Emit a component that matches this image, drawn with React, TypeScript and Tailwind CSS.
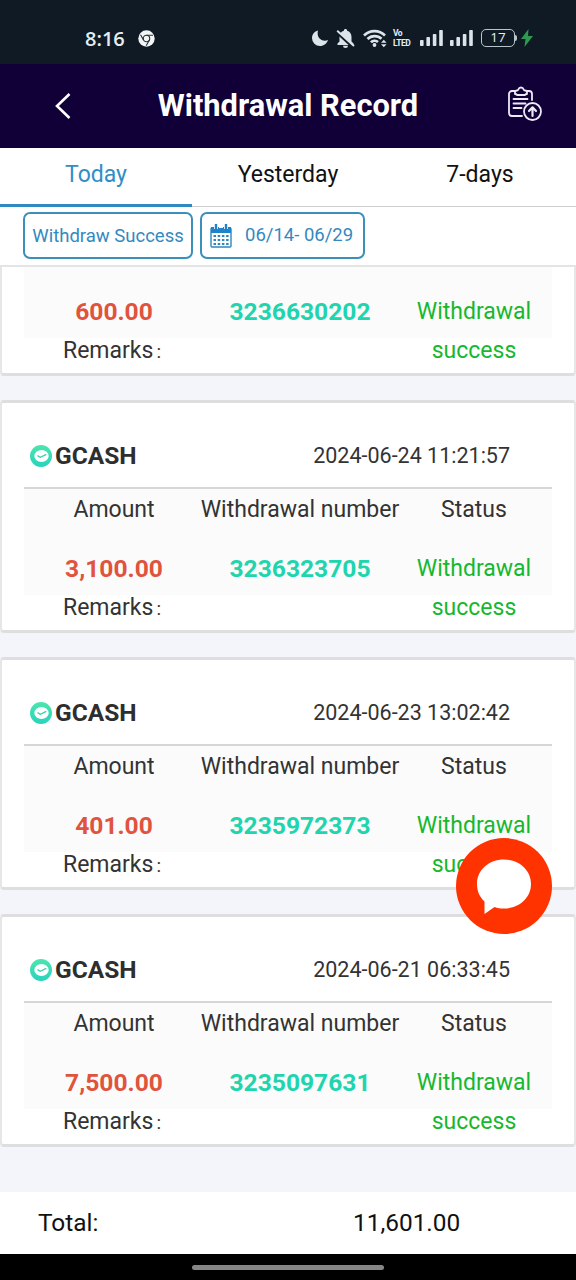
import React, { useState } from "react";


type RecordItem = {
  amount: string;
  number: string;
  date?: string;
};

const records: RecordItem[] = [
  { amount: "600.00", number: "3236630202" },
  { amount: "3,100.00", number: "3236323705", date: "2024-06-24 11:21:57" },
  { amount: "401.00", number: "3235972373", date: "2024-06-23 13:02:42" },
  { amount: "7,500.00", number: "3235097631", date: "2024-06-21 06:33:45" },
];

const tabs = ["Today", "Yesterday", "7-days"];


function SignalIcon() {
  return (
    <svg width="23" height="18" viewBox="0 0 23 18" fill="#dce4ea">
      <rect x="0" y="11" width="3.6" height="6" rx="0.8" />
      <rect x="6.4" y="8" width="3.6" height="9" rx="0.8" />
      <rect x="12.8" y="5" width="3.6" height="12" rx="0.8" />
      <rect x="19.2" y="1" width="3.6" height="16" rx="0.8" />
    </svg>
  );
}

function StatusBar() {
  return (
    <div className="flex h-16 shrink-0 items-center bg-[#0f1a25] pt-3 pl-[85px] pr-[43px] text-[#e6edf2]">
      <span className="w-[53px] pt-px font-['Open_Sans'] text-[20px] leading-6 font-semibold">8:16</span>
      <svg width="17" height="17" viewBox="0 0 17 17">
        <circle cx="8.5" cy="8.5" r="8.2" fill="#f2f4f5" />
        <circle cx="8.5" cy="8.5" r="3.2" fill="none" stroke="#26323c" strokeWidth="1.1" />
        <path d="M8.5 5.2h6.5M5.6 10.1 2.500 4.800M11.400 10.100 8.200 15.700" stroke="#26323c" strokeWidth="1.1" />
      </svg>
      <div className="ml-auto flex items-center">
        <svg width="18" height="18" viewBox="0 0 18 18" className="mr-[7px]">
          <path d="M7 1.500C3.500 2.300 1 5.400 1 9a8 8 0 0 0 8 8c3.800 0 7-2.600 8-6-5.500 2.500-12-2-10-9.500z" fill="#dce4ea" />
        </svg>
        <svg width="19" height="19" viewBox="0 0 19 19" className="mr-[8px]">
          <path d="M9.500 0c1.100 0 1.600.700 1.600 1.700C13.900 2.500 15.500 4.800 15.500 8v4.500l2 2V16h-16v-1.500l2-2V8c0-3.200 1.600-5.500 4.400-6.300C7.900.700 8.400 0 9.500 0zM7 16.700h5a2.500 2.300 0 0 1-5 0z" fill="#dce4ea" />
          <path d="M1 3.600 17 18.500" stroke="#0f1a25" strokeWidth="2.400" />
          <path d="M1.200 1.800 18 17" stroke="#dce4ea" strokeWidth="1.900" />
        </svg>
        <svg width="24" height="19" viewBox="0 0 24 19" fill="none" stroke="#dce4ea" strokeWidth="2.700" className="mr-[6px]">
          <path d="M1 6.500a15 15 0 0 1 21 0M4.500 10a10 10 0 0 1 14-.2M8 13.400a5 5 0 0 1 7-.4" />
          <circle cx="11.500" cy="16" r="1.900" fill="#dce4ea" stroke="none" />
          <path d="m18 13.800 2.800-3 2.800 3zM18 15.300l2.800 3 2.800-3z" fill="#dce4ea" stroke="none" />
        </svg>
        <div className="mr-[7px] flex w-[20px] flex-col font-['Roboto'] text-[8.5px] leading-[10px] font-bold tracking-[-0.5px]">
          <span>Vo</span>
          <span>LTED</span>
        </div>
        <SignalIcon />
        <div className="w-[7px]" />
        <SignalIcon />
        <div className="ml-[8px] flex h-[18px] w-[34px] items-center justify-center rounded-[5px] border-[1.5px] border-[#b9c3ca] font-['Open_Sans'] text-[13.5px] leading-none">
          17
        </div>
        <div className="h-[6px] w-[2px] rounded-r bg-[#b9c3ca]" />
        <svg width="12" height="18" viewBox="0 0 12 18" className="ml-[4px]">
          <path d="M7.500 0 0 10h4.500L3.500 18 12 7H7z" fill="#2e9a50" />
        </svg>
      </div>
    </div>
  );
}

function Header() {
  return (
    <div className="grid h-[84px] shrink-0 grid-cols-[106px_1fr_106px] items-center bg-[#110038] text-white">
      <svg width="20" height="28" viewBox="0 0 20 28" fill="none" stroke="white" strokeWidth="2.600" className="ml-[53px]">
        <path d="M16.500 2 4 14l12.500 12" />
      </svg>
      <h1 className="text-center text-[30.8px] leading-9 font-bold whitespace-nowrap">Withdrawal Record</h1>
      <svg width="36" height="36" viewBox="0 0 36 36" fill="none" stroke="#eee9f7" strokeWidth="1.800" strokeLinecap="round" strokeLinejoin="round" className="mb-[4px] ml-[37px]">
        <path d="M8 5H5a3 3 0 0 0-3 3v19a3 3 0 0 0 3 3h10M20 5h2a3 3 0 0 1 3 3v6" />
        <path d="M8 8V6Q8 4.500 10 4.500 11 4.500 11.300 3.500 12 1.500 14 1.500t2.700 2Q17 4.500 18 4.500q2 0 2 1.500V8q-1.500 0-2 1h-8q-.500-1-2-1z" />
        <path d="M6.500 13h14M6.500 17.500h12M6.500 22h8" />
        <circle cx="25.500" cy="25.500" r="8.500" />
        <path d="M25.500 30V22M22 25l3.500-3.700L29 25" strokeWidth="2.200" />
      </svg>
    </div>
  );
}

function CalendarIcon() {
  return (
    <svg width="22" height="24" viewBox="0 0 22 24">
      <rect x="1" y="4" width="20" height="19" rx="1" fill="white" stroke="#2f87bd" strokeWidth="1.400" />
      <path d="M1 3h20v6H1z" fill="#1f83c9" />
      <path d="M6 0v5M16 0v5M11 1v3" stroke="white" strokeWidth="4" />
      <path d="M6 .5V5M16 .5V5" stroke="#1f83c9" strokeWidth="2.400" strokeLinecap="round" />
      <path d="M3.500 12h15.500M3.500 16h15.500M3.500 20h15.500" stroke="#2f87bd" strokeWidth="2.200" strokeDasharray="2.500 1.700" />
    </svg>
  );
}

function GcashIcon() {
  return (
    <svg width="22" height="22" viewBox="0 0 22 22">
      <defs>
        <linearGradient id="mint" x1="0" y1="0" x2="0" y2="1">
          <stop offset="0" stopColor="#4be6ae" />
          <stop offset="1" stopColor="#28d3bd" />
        </linearGradient>
      </defs>
      <circle cx="11" cy="11" r="11" fill="url(#mint)" />
      <ellipse cx="11.500" cy="11" rx="7.200" ry="6" fill="white" />
      <path d="m7.500 10.600 2.800 1.700 6-3" fill="none" stroke="#35d3b0" strokeWidth="1.300" />
    </svg>
  );
}

function RecordCard({ record }: { record: RecordItem }) {
  return (
    <div
      className={
        record.date
          ? "shrink-0 rounded-[4px] border-x-2 border-y-[3px] border-x-[#e6e6e6] border-y-[#dedede] bg-white px-[22px] pb-[9px] text-[23px] text-[#333333]"
          : "shrink-0 rounded-b-[4px] border-x-2 border-b-[3px] border-x-[#e6e6e6] border-b-[#dedede] bg-white px-[22px] pb-[9px] text-[23px] text-[#333333]"
      }
    >
      {record.date && (
        <div className="flex h-[86px] items-center justify-between border-b-2 border-[#d6d6d6] pt-[22px] pr-[42px] pl-[6px]">
          <div className="flex items-center">
            <GcashIcon />
            <span className="ml-[3px] text-[24.5px] font-bold text-[#2e2e2e]">GCASH</span>
          </div>
          <span className="text-[21.5px]">{record.date}</span>
        </div>
      )}
      {record.date ? (
        <div className="grid h-[60px] grid-cols-[174px_204px_1fr] bg-[#fbfbfb] text-center leading-[41px]">
          <span className="pl-[6px]">Amount</span>
          <span className="whitespace-nowrap">Withdrawal number</span>
          <span className="pr-[6px]">Status</span>
        </div>
      ) : (
        <div className="h-[25px] bg-[#fbfbfb]" />
      )}
      {/* the status wraps to a second line, next to the remarks */}
      <div className="grid h-[46px] grid-cols-[180px_192px_1fr] bg-[#fbfbfb] text-center leading-[39px]">
        <span className="text-[24.6px] font-bold text-[#e0533d]">{record.amount}</span>
        <span className="text-[24.6px] font-bold text-[#20d5ae]">{record.number}</span>
        <span className="px-4 text-[#16b82e]">Withdrawal success</span>
      </div>
      <div className="h-[26px] w-[180px] pr-[4px] text-center leading-[26px]">
        Remarks<span className="ml-[3px] text-[19px]">:</span>
      </div>
    </div>
  );
}

export default function App() {

  const [activeTab, setActiveTab] = useState("Today");

  return (
    <div className="relative flex h-[1280px] w-[576px] flex-col overflow-hidden bg-[#f4f4fb] font-['Roboto',sans-serif]">
      <StatusBar />
      <Header />

      <div className="grid h-[59px] shrink-0 grid-cols-3 bg-white">
        {tabs.map((tab) => (
          <button
            key={tab}
            onClick={() => setActiveTab(tab)}
            className={
              tab === activeTab
                ? "border-b-3 border-[#2f8ac2] pb-[2px] text-[23px] text-[#2f8ec8]"
                : "border-b border-[#cfcfcf] pb-[4px] text-[23px] text-[#111111]"
            }
          >
            {tab}
          </button>
        ))}
      </div>

      <div className="flex h-[58px] shrink-0 gap-[7px] bg-white pt-[5px] pl-[23px] text-[18.5px] text-[#3489c0]">
        <button className="h-[47px] w-[170px] rounded-[7px] border-2 border-[#3b8fbb] pt-[3px] whitespace-nowrap">Withdraw Success</button>
        <button className="flex h-[47px] w-[165px] items-center rounded-[7px] border-2 border-[#3b8fbb] pl-[8px] whitespace-nowrap">
          <CalendarIcon />
          <span className="ml-[13px]">06/14- 06/29</span>
        </button>
      </div>

      <div className="flex h-[927px] shrink-0 flex-col justify-end gap-[24px] overflow-hidden border-t-2 border-[#e4e4e4] pb-[45px]">
        {records.map((record) => (
          <RecordCard key={record.number} record={record} />
        ))}
      </div>

      <div className="flex h-[62px] shrink-0 items-center bg-white text-[24.4px] text-[#111111]">
        <span className="w-[353px] pl-[38px]">Total:</span>
        <span>11,601.00</span>
      </div>

      <div className="flex h-[26px] shrink-0 items-center justify-center bg-black">
        <div className="h-[5px] w-[192px] rounded-full bg-[#858585]" />
      </div>

      {/* floating support chat */}
      <button className="absolute top-[838px] left-[456px] h-24 w-24 rounded-full bg-[#fe3300]">
        <svg width="96" height="96" viewBox="0 0 96 96">
          <path d="M48 21.500c15 0 27 10.500 27 24.500S63 70.500 48 70.500c-3.500 0-6.500-.4-9.500-1.500L28.500 76V63.500C23.500 59 21 53 21 46c0-14 12-24.500 27-24.500z" fill="white" />
        </svg>
      </button>
    </div>
  );
}
